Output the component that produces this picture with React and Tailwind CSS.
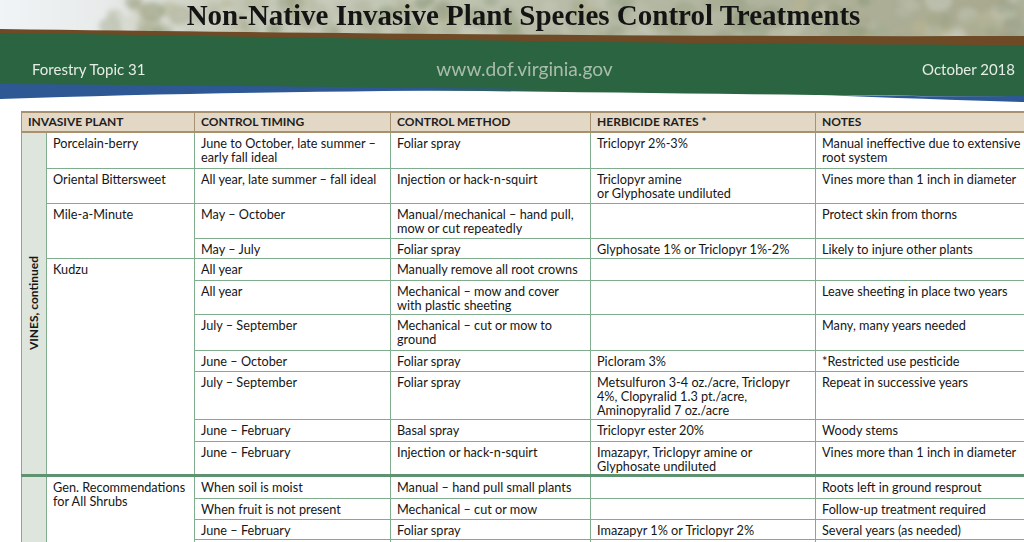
import React from "react";

function rand(seed) {
  let s = seed;
  return () => {
    s = (s * 16807) % 2147483647;
    return (s - 1) / 2147483646;
  };
}

function Banner() {
  const r = rand(42);
  const blobs = [];
  const palette = ["#a3ab92", "#b6bba6", "#98a184", "#c1c5b3", "#8e9879", "#adaf93", "#b7b493", "#c8cbbd"];
  for (let i = 0; i < 320; i++) {
    const x = 110 + r() * 930;
    const y = r() * 50;
    const rr = 4 + r() * 10;
    const c = palette[Math.floor(r() * palette.length)];
    blobs.push(<ellipse key={i} cx={x} cy={y} rx={rr} ry={rr * 0.8} fill={c} opacity={0.3 + r() * 0.35} />);
  }
  return (
    <svg className="absolute inset-0" width="1024" height="111" viewBox="0 0 1024 111">
      <defs>
        <linearGradient id="sky" x1="0" x2="1" y1="0" y2="0">
          <stop offset="0" stopColor="#f1f4f6" />
          <stop offset="0.1" stopColor="#e8ebea" />
          <stop offset="0.2" stopColor="#cdd1c2" />
          <stop offset="0.6" stopColor="#b5baa5" />
          <stop offset="1" stopColor="#a8a88e" />
        </linearGradient>
        <filter id="soft" x="-10%" y="-10%" width="120%" height="120%">
          <feGaussianBlur stdDeviation="2.6" />
        </filter>
      </defs>
      <rect x="0" y="0" width="1024" height="50" fill="url(#sky)" />
      <g filter="url(#soft)">{blobs}</g>
      <path d="M0,29 C300,33 650,37 1024,36 L1024,47 C650,46 300,40 0,35 Z" fill="#6e4a26" />
      <path d="M0,33 C300,37 600,44 1024,45 L1024,97 C760,95 420,90 0,85 Z" fill="#2b6440" />
      <path d="M0,84 C150,85 350,87 620,90 C420,90 200,92 0,99 Z" fill="#2d5894" />
      <path d="M820,95 C920,96.5 980,96.5 1024,96 L1024,102 C960,100 890,98 820,95 Z" fill="#2d5894" />
    </svg>
  );
}

const bc = "border border-[#80ad8e]";
const td = `${bc} align-top px-[6px] pt-[3px] pb-0 leading-[14px] whitespace-nowrap`;
const th = "border border-[#a8916f] border-y-2 text-left align-middle px-[6px] font-bold text-[12px] leading-[14px] whitespace-nowrap";
const sep = "border-t-[3px] border-t-[#5f9270]";

export default function App() {
  return (
    <div className="w-[1024px] h-[542px] overflow-hidden bg-white relative" style={{ fontFamily: "Lato, 'Open Sans', sans-serif" }}>
      <div className="relative h-[111px]">
        <Banner />
        <div className="relative flex flex-col">
          <div className="h-[33px] flex items-start justify-center pl-[23px]">
            <h1 className="text-[29px] leading-[31px] font-bold text-[#141414]" style={{ fontFamily: "'Liberation Serif', 'DejaVu Serif', serif" }}>
              Non-Native Invasive Plant Species Control Treatments
            </h1>
          </div>
          <div className="mt-[26px] h-[20px] flex items-center justify-between pl-[32px] pr-[9px] text-[15px]">
            <span className="text-[#e6ede6] w-[300px]">Forestry Topic 31</span>
            <span className="text-[#a9bcab] text-[19.2px] pl-[2px]">www.dof.virginia.gov</span>
            <span className="text-[#e6ede6] w-[300px] text-right">October 2018</span>
          </div>
        </div>
      </div>
      <table className="ml-[21px] border-collapse table-fixed text-[12.7px] text-[#161616]" style={{ width: 1043 }}>
        <colgroup>
          <col style={{ width: 25 }} />
          <col style={{ width: 148 }} />
          <col style={{ width: 196 }} />
          <col style={{ width: 200 }} />
          <col style={{ width: 225 }} />
          <col style={{ width: 249 }} />
        </colgroup>
        <thead>
          <tr className="h-[20px] bg-[#e3d7c5] text-[#1e1e1e]">
            <th colSpan={2} className={th}>INVASIVE PLANT</th>
            <th className={th}>CONTROL TIMING</th>
            <th className={th}>CONTROL METHOD</th>
            <th className={th}>HERBICIDE RATES *</th>
            <th className={th}>NOTES</th>
          </tr>
        </thead>
        <tbody>
          <tr className="h-[36px]">
            <td rowSpan={11} className={`${bc} bg-[#dde5dd] align-middle p-0`}>
              <div className="flex items-center justify-center">
                <span className="font-bold text-[12px] leading-[14px] whitespace-nowrap [writing-mode:vertical-rl] rotate-180">VINES, continued</span>
              </div>
            </td>
            <td className={td}>Porcelain-berry</td>
            <td className={td}>June to October, late summer –<br />early fall ideal</td>
            <td className={td}>Foliar spray</td>
            <td className={td}>Triclopyr 2%-3%</td>
            <td className={td}>Manual ineffective due to extensive<br />root system</td>
          </tr>
          <tr className="h-[35px]">
            <td className={td}>Oriental Bittersweet</td>
            <td className={td}>All year, late summer – fall ideal</td>
            <td className={td}>Injection or hack-n-squirt</td>
            <td className={td}>Triclopyr amine<br />or Glyphosate undiluted</td>
            <td className={td}>Vines more than 1 inch in diameter</td>
          </tr>
          <tr className="h-[35px]">
            <td rowSpan={2} className={td}>Mile-a-Minute</td>
            <td className={td}>May – October</td>
            <td className={td}>Manual/mechanical – hand pull,<br />mow or cut repeatedly</td>
            <td className={td}></td>
            <td className={td}>Protect skin from thorns</td>
          </tr>
          <tr className="h-[20px]">
            <td className={td}>May – July</td>
            <td className={td}>Foliar spray</td>
            <td className={td}>Glyphosate 1% or Triclopyr 1%-2%</td>
            <td className={td}>Likely to injure other plants</td>
          </tr>
          <tr className="h-[22px]">
            <td rowSpan={7} className={td}>Kudzu</td>
            <td className={td}>All year</td>
            <td className={td}>Manually remove all root crowns</td>
            <td className={td}></td>
            <td className={td}></td>
          </tr>
          <tr className="h-[34px]">
            <td className={td}>All year</td>
            <td className={td}>Mechanical – mow and cover<br />with plastic sheeting</td>
            <td className={td}></td>
            <td className={td}>Leave sheeting in place two years</td>
          </tr>
          <tr className="h-[36px]">
            <td className={td}>July – September</td>
            <td className={td}>Mechanical – cut or mow to<br />ground</td>
            <td className={td}></td>
            <td className={td}>Many, many years needed</td>
          </tr>
          <tr className="h-[21px]">
            <td className={td}>June – October</td>
            <td className={td}>Foliar spray</td>
            <td className={td}>Picloram 3%</td>
            <td className={td}>*Restricted use pesticide</td>
          </tr>
          <tr className="h-[48px]">
            <td className={td}>July – September</td>
            <td className={td}>Foliar spray</td>
            <td className={td}>Metsulfuron 3-4 oz./acre, Triclopyr<br />4%, Clopyralid 1.3 pt./acre,<br />Aminopyralid 7 oz./acre</td>
            <td className={td}>Repeat in successive years</td>
          </tr>
          <tr className="h-[22px]">
            <td className={td}>June – February</td>
            <td className={td}>Basal spray</td>
            <td className={td}>Triclopyr ester 20%</td>
            <td className={td}>Woody stems</td>
          </tr>
          <tr className="h-[34px]">
            <td className={td}>June – February</td>
            <td className={td}>Injection or hack-n-squirt</td>
            <td className={td}>Imazapyr, Triclopyr amine or<br />Glyphosate undiluted</td>
            <td className={td}>Vines more than 1 inch in diameter</td>
          </tr>
          <tr className={`h-[23px] ${sep}`}>
            <td rowSpan={4} className={`${bc} ${sep} bg-[#dde5dd]`}></td>
            <td rowSpan={4} className={`${td} ${sep}`}>Gen. Recommendations<br />for All Shrubs</td>
            <td className={`${td} ${sep}`}>When soil is moist</td>
            <td className={`${td} ${sep}`}>Manual – hand pull small plants</td>
            <td className={`${td} ${sep}`}></td>
            <td className={`${td} ${sep}`}>Roots left in ground resprout</td>
          </tr>
          <tr className="h-[21px]">
            <td className={td}>When fruit is not present</td>
            <td className={td}>Mechanical – cut or mow</td>
            <td className={td}></td>
            <td className={td}>Follow-up treatment required</td>
          </tr>
          <tr className="h-[20px]">
            <td className={td}>June – February</td>
            <td className={td}>Foliar spray</td>
            <td className={td}>Imazapyr 1% or Triclopyr 2%</td>
            <td className={td}>Several years (as needed)</td>
          </tr>
          <tr className="h-[21px]">
            <td className={td}></td>
            <td className={td}></td>
            <td className={td}></td>
            <td className={td}></td>
          </tr>
        </tbody>
      </table>
    </div>
  );
}
